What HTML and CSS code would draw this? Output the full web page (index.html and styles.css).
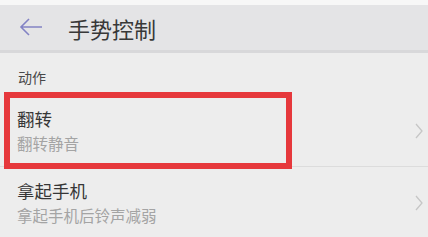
FILE: index.html
```html
<!DOCTYPE html>
<html lang="zh">
<head>
  <meta charset="UTF-8">
  <title>手势控制</title>
  <link rel="stylesheet" href="styles.css">
</head>
<body>
  <div class="topbar"></div>
  <div class="header">
    <svg class="back" width="24" height="18" viewBox="0 0 24 18">
      <path d="M23 9H2M10 1L2 9l8 8" fill="none" stroke="#8282c4" stroke-width="1.6"/>
    </svg>
    <span class="title">手势控制</span>
  </div>

  <div class="label">动作</div>

  <div class="list">
    <!-- 翻转 -->
    <div class="row">
      <div class="text">
        <div class="main">翻转</div>
        <div class="sub">翻转静音</div>
      </div>
      <svg class="chev" width="8" height="16" viewBox="0 0 8 16">
        <path d="M1 1l6 7-6 7" fill="none" stroke="#c6c6c6" stroke-width="1.3"/>
      </svg>
      <div class="mark"></div>
    </div>

    <!-- 拿起手机 -->
    <div class="row">
      <div class="text">
        <div class="main">拿起手机</div>
        <div class="sub">拿起手机后铃声减弱</div>
      </div>
      <svg class="chev" width="8" height="16" viewBox="0 0 8 16">
        <path d="M1 1l6 7-6 7" fill="none" stroke="#c6c6c6" stroke-width="1.3"/>
      </svg>
    </div>
  </div>
</body>
</html>
```

FILE: styles.css
```css
body { margin: 0; width: 428px; height: 237px; overflow: hidden; background: #ededed; font-family: "Noto Sans CJK SC", "Noto Sans", sans-serif; color: #333; }
.topbar { height: 5px; background: #f7f7f7; }
.header { height: 45px; display: flex; align-items: center; background: #e4e4e6; border-bottom: 3px solid #d8d8da; }
.back { margin-left: 19px; margin-top: -1px; }
.title { margin-left: 25px; font-size: 22px; line-height: 26px; color: #383838; }
.label { padding: 16px 0 10px 18px; font-size: 14px; line-height: 16px; color: #484848; }
.list { position: relative; }
.row { position: relative; height: 71px; display: flex; align-items: center; border-bottom: 1px solid #dcdcdc; }
.text { flex: 1; padding-left: 17px; }
.main { font-size: 17.5px; line-height: 20px; color: #363636; }
.sub { margin-top: 4px; font-size: 15.5px; line-height: 20px; color: #a4a4a4; }
.chev { margin-right: 5px; }
.mark { position: absolute; left: 4px; top: -3px; width: 276px; height: 65px; border: 6px solid #e6383c; }
```
